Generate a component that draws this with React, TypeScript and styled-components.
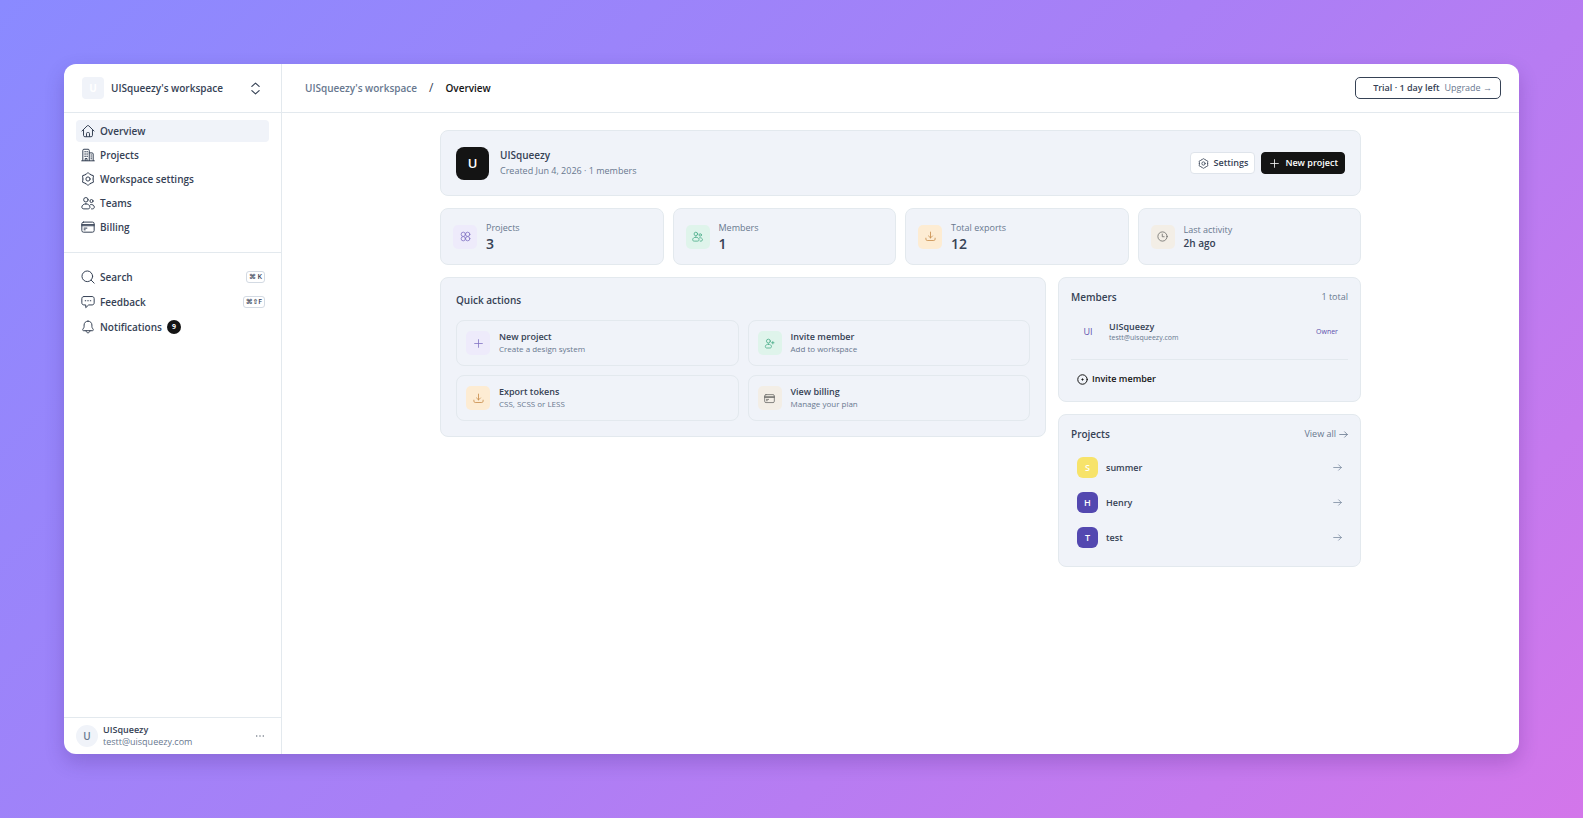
import React from "react";
import styled, { createGlobalStyle } from "styled-components";

const ink = "#364255";
const muted = "#68788f";
const line = "#e3e9ee";
const panel = "#f0f3f9";
const black = "#141414";

const GlobalStyle = createGlobalStyle`
  *, *::before, *::after { box-sizing: border-box; }
  body { margin: 0; }
  body, button {
    font-family: "Open Sans", "Noto Sans", sans-serif;
    font-size: 10px;
    line-height: 14px;
    color: ${ink};
  }
  button { margin: 0; padding: 0; border: 0; background: none; text-align: left; cursor: pointer; }
  a { color: inherit; text-decoration: none; }
  ul { list-style: none; margin: 0; padding: 0; }
  h1, h2 { margin: 0; }
`;

/* ---------- icons ---------- */

type IconName =
  | "home" | "building" | "gear" | "users" | "card" | "search" | "chat" | "bell"
  | "updown" | "plus" | "grid" | "download" | "clock" | "userPlus" | "target" | "arrow" | "dots";

const drawings: Record<IconName, React.ReactNode> = {
  home: (
    <>
      <path d="M1.4 10 8.9 2.600a1.600 1.600 0 0 1 2.200 0L18.600 10" />
      <path d="M3.600 8v8.200c0 1.200.8 2 2 2h8.800c1.200 0 2-.8 2-2V8" />
      <path d="M7.900 18v-4.600c0-.7.5-1.200 1.200-1.200h1.800c.7 0 1.200.5 1.200 1.200V18" />
    </>
  ),
  building: (
    <>
      <path d="M1 18.300h18M2.600 18V3.400c0-1 .6-1.600 1.600-1.600h6c1 0 1.600.6 1.600 1.600V18M11.800 7h4c1 0 1.600.6 1.600 1.600V18" />
      <path d="M5.300 5.400h1.200M8.200 5.400h1.200M5.300 8.600h1.200M8.200 8.600h1.200M5.300 11.800h1.200M8.200 11.800h1.200M14.200 10h.9M14.200 12.800h.9M14.200 15.400h.9M6 18v-3h2.600v3" />
    </>
  ),
  gear: (
    <>
      <circle cx="10" cy="10" r="3" />
      {[0, 60, 120, 180, 240, 300].map((turn) => (
        <path key={turn} d="M6.300 3.600C8 3.600 8.500 1.200 10 1.200S12 3.600 13.700 3.600" transform={`rotate(${turn} 10 10)`} />
      ))}
    </>
  ),
  users: (
    <>
      <circle cx="7" cy="5.400" r="3.200" />
      <circle cx="15" cy="7.200" r="2.200" />
      <path d="M7 11.200c-3 0-5.800 2-5.800 4.700 0 1.700 1.200 2.500 3 2.500h5.600c1.800 0 3-.8 3-2.500 0-2.700-2.800-4.700-5.800-4.700z" />
      <path d="M13.600 12.300c2.800-.6 5.400 1 5.400 3.400 0 1.700-1 2.700-2.400 2.700H15" />
    </>
  ),
  card: (
    <>
      <rect x="1.200" y="3" width="17.600" height="14.400" rx="2.400" />
      <path d="M1.200 6.600h17.600M1.200 8.200h17.600M4.400 11.600h4M4.400 14h1.600" />
    </>
  ),
  search: (
    <>
      <circle cx="9" cy="9" r="7.600" />
      <path d="m14.600 14.600 4.200 4.200" />
    </>
  ),
  chat: (
    <>
      <path d="M4.200 2.200h11.600c1.800 0 3 1.200 3 3v6c0 1.800-1.200 3-3 3H11l-4.200 3.900v-3.900H4.200c-1.800 0-3-1.200-3-3v-6c0-1.800 1.200-3 3-3z" />
      <path d="M6 8.200h.8M9.600 8.200h.8M13.200 8.200h.8" />
    </>
  ),
  bell: (
    <>
      <path d="M10 1.600c-3.400 0-5.600 2.600-5.600 5.600v2.400c0 .8-.3 1.400-.8 2.100l-1 1.600c-.6 1 0 2 1 2h12.800c1 0 1.600-1 1-2l-1-1.600c-.5-.7-.8-1.300-.8-2.100V7.200c0-3-2.200-5.600-5.600-5.600z" />
      <path d="M7.200 15.400c.2 1.800 1.300 2.900 2.800 2.900s2.600-1.100 2.800-2.900" />
    </>
  ),
  updown: <path d="m4.400 6.800 5.600-5 5.600 5M4.400 13.200l5.600 5 5.600-5" />,
  plus: <path d="M10 3v14M3 10h14" />,
  grid: (
    <>
      <circle cx="6" cy="6" r="3.900" />
      <circle cx="14" cy="6" r="3.900" />
      <circle cx="6" cy="14" r="3.900" />
      <circle cx="14" cy="14" r="3.900" />
    </>
  ),
  download: <path d="M10 2v10.500M6.400 9l3.600 3.600L13.600 9M1.600 13v1.800c0 1.500 1 2.500 2.500 2.500h11.800c1.500 0 2.500-1 2.500-2.500V13" />,
  clock: (
    <>
      <circle cx="10" cy="10" r="8.400" />
      <path d="M9.600 5.600v4.800H13" />
    </>
  ),
  userPlus: (
    <>
      <circle cx="8" cy="5.600" r="3.500" />
      <path d="M8 11.200c-3 0-5.600 1.900-5.600 4.500 0 1.600 1.100 2.500 2.800 2.500h5.600c1.700 0 2.800-.9 2.800-2.500 0-2.600-2.600-4.500-5.600-4.500z" />
      <path d="M16 6.400v4.400M13.800 8.600h4.400" />
    </>
  ),
  target: (
    <>
      <circle cx="10" cy="10" r="8.600" />
      <path d="M10 8.800v2.400M8.800 10h2.400" />
    </>
  ),
  arrow: <path d="M1.500 10h17M12.500 4l6 6-6 6" />,
  dots: <path d="M3 10h.8M9.600 10h.8M16.200 10h.8" />,
};

const Svg = styled.svg`
  display: block;
  flex: none;
  fill: none;
  stroke: currentColor;
  stroke-linecap: round;
  stroke-linejoin: round;
`;

const Icon = ({ name, size = 14, weight = 1 }: { name: IconName; size?: number; weight?: number }) => (
  <Svg width={size} height={size} viewBox="0 0 20 20" strokeWidth={(20 / size) * weight} aria-hidden="true">
    {drawings[name]}
  </Svg>
);

/* ---------- frame ---------- */

const Backdrop = styled.div`
  display: flex;
  min-height: 100vh;
  padding: 64px;
  background: linear-gradient(135deg, #8a8aff 0%, #a97ff6 50%, #d376ea 100%);
`;

const Window = styled.div`
  flex: 1;
  display: flex;
  min-width: 0;
  overflow: hidden;
  background: #fff;
  border-radius: 12px;
  box-shadow: 0 8px 20px rgba(40, 10, 90, 0.2);
`;

const Sidebar = styled.aside`
  flex: none;
  display: flex;
  flex-direction: column;
  width: 218px;
  border-right: 1px solid ${line};
`;

const Switcher = styled.button`
  display: flex;
  align-items: center;
  gap: 7px;
  height: 49px;
  padding: 0 19px 0 18px;
  border-bottom: 1px solid ${line};
  font-weight: 600;
  span:nth-child(2) { flex: 1; }
`;

const WorkspaceLogo = styled.span`
  display: grid;
  place-items: center;
  width: 22px;
  height: 22px;
  border-radius: 4px;
  background: ${panel};
  color: #fff;
  font-weight: 700;
`;

const NavGroup = styled.ul<{ $gap: number }>`
  display: flex;
  flex-direction: column;
  gap: ${(p) => p.$gap}px;
  padding: 7px 12px 14px;
  & + & { padding-top: 13px; border-top: 1px solid ${line}; }
`;

const NavLink = styled.a<{ $active?: boolean }>`
  display: flex;
  align-items: center;
  gap: 5px;
  height: 22px;
  padding: 0 4px 0 5px;
  border-radius: 4px;
  background: ${(p) => (p.$active ? panel : "transparent")};
  font-weight: 600;
`;

const Keys = styled.kbd`
  margin-left: auto;
  padding: 0 2px;
  border: 1px solid #d3dae3;
  border-radius: 3px;
  font: 600 7px/10px "Open Sans", "DejaVu Sans", sans-serif;
`;

const Badge = styled.span`
  display: grid;
  place-items: center;
  width: 14px;
  height: 14px;
  border-radius: 50%;
  background: ${black};
  color: #fff;
  font-size: 7px;
  line-height: 10px;
  font-weight: 700;
`;

const Account = styled.button`
  display: flex;
  align-items: center;
  gap: 5px;
  height: 37px;
  margin-top: auto;
  padding: 0 16px 0 12px;
  border-top: 1px solid ${line};
`;

const AccountAvatar = styled.span`
  display: grid;
  place-items: center;
  width: 22px;
  height: 22px;
  border-radius: 50%;
  background: ${panel};
  color: ${muted};
  font-weight: 600;
`;

const Lines = styled.span`
  flex: 1;
  display: flex;
  flex-direction: column;
  min-width: 0;
`;

const Text = styled.span<{ $size: number; $lh?: number; $weight?: number; $color?: string }>`
  font-size: ${(p) => p.$size}px;
  line-height: ${(p) => p.$lh ?? 12}px;
  font-weight: ${(p) => p.$weight ?? 400};
  color: ${(p) => p.$color ?? ink};
`;

/* ---------- main ---------- */

const Main = styled.main`
  flex: 1;
  min-width: 0;
`;

const TopBar = styled.header`
  display: flex;
  align-items: center;
  justify-content: space-between;
  height: 49px;
  padding: 0 18px 0 23px;
  border-bottom: 1px solid ${line};
`;

const Crumbs = styled.nav`
  display: flex;
  gap: 12px;
  font-weight: 600;
  a { color: ${muted}; }
  span { font-size: 12px; font-weight: 400; }
  strong { font-weight: 600; color: ${black}; }
`;

const Trial = styled.button`
  display: flex;
  align-items: center;
  gap: 5px;
  height: 22px;
  padding: 0 8px 0 17px;
  border: 1px solid ${ink};
  border-radius: 5px;
`;

const Content = styled.div`
  display: flex;
  flex-direction: column;
  gap: 12px;
  max-width: 921px;
  margin: 17px auto;
`;

const Card = styled.section`
  background: ${panel};
  border: 1px solid ${line};
  border-radius: 8px;
`;

const Hero = styled(Card)`
  display: flex;
  align-items: center;
  gap: 11px;
  height: 66px;
  padding: 0 15px;
`;

const HeroLogo = styled.span`
  display: grid;
  place-items: center;
  width: 33px;
  height: 33px;
  border-radius: 8px;
  background: ${black};
  color: #fff;
  font-size: 13px;
  font-weight: 600;
`;

const HeroButtons = styled.div`
  display: flex;
  gap: 6px;
`;

const Button = styled.button<{ $primary?: boolean }>`
  display: flex;
  align-items: center;
  gap: 5px;
  height: 22px;
  padding: 0 6px 0 7px;
  border: 1px solid ${(p) => (p.$primary ? black : "#dfe4eb")};
  border-radius: 4px;
  background: ${(p) => (p.$primary ? black : "#fff")};
  color: ${(p) => (p.$primary ? "#fff" : ink)};
  font-size: 9px;
  font-weight: 600;
`;

const Stats = styled.div`
  display: grid;
  grid-template-columns: repeat(4, 1fr);
  gap: 9px;
`;

const Stat = styled(Card)`
  display: flex;
  align-items: center;
  gap: 9px;
  height: 57px;
  padding: 0 12px;
`;

const tones = {
  violet: ["#eeebfb", "#8273c4"],
  green: ["#dff4eb", "#46ab87"],
  orange: ["#fdecd3", "#c78a48"],
  sand: ["#f3eee6", "#6b6b68"],
};

const Tile = styled.span<{ $tone: keyof typeof tones }>`
  display: grid;
  place-items: center;
  flex: none;
  width: 24px;
  height: 24px;
  border-radius: 5px;
  background: ${(p) => tones[p.$tone][0]};
  color: ${(p) => tones[p.$tone][1]};
`;

const Columns = styled.div`
  display: grid;
  grid-template-columns: 2fr 1fr;
  align-items: start;
  gap: 12px;
`;

const Side = styled.div`
  display: flex;
  flex-direction: column;
  gap: 12px;
`;

const Quick = styled(Card)`
  padding: 15px;
`;

const Title = styled.h2`
  font-size: 10px;
  line-height: 14px;
  font-weight: 600;
`;

const Actions = styled.div`
  display: grid;
  grid-template-columns: 1fr 1fr;
  gap: 9px;
  margin-top: 13px;
`;

const Action = styled.button`
  display: flex;
  align-items: center;
  gap: 9px;
  height: 46px;
  padding: 0 9px;
  border: 1px solid ${line};
  border-radius: 8px;
`;

const ListCard = styled(Card)`
  padding: 11px 12px;
`;

const CardHead = styled.div`
  display: flex;
  align-items: center;
  justify-content: space-between;
  height: 16px;
`;

const MoreLink = styled.a`
  display: flex;
  align-items: center;
  gap: 3px;
  color: ${muted};
  font-size: 9px;
`;

const MemberRow = styled.div`
  display: flex;
  align-items: center;
  gap: 10px;
  height: 55px;
  padding: 0 10px 0 6px;
  border-bottom: 1px solid ${line};
`;

const Initials = styled.span`
  display: grid;
  place-items: center;
  width: 22px;
  height: 22px;
  color: #5b50ad;
  font-size: 9px;
`;

const InviteButton = styled.button`
  display: flex;
  align-items: center;
  gap: 4px;
  height: 22px;
  margin-top: 8px;
  padding: 0 6px;
  color: ${black};
  font-size: 9px;
  font-weight: 600;
`;

const ProjectList = styled.ul`
  margin-top: 8px;
`;

const ProjectLink = styled.a`
  display: flex;
  align-items: center;
  gap: 8px;
  height: 35px;
  padding: 0 6px;
  font-size: 9px;
  font-weight: 600;
  svg { margin-left: auto; color: #7c8ba1; }
`;

const ProjectLogo = styled.span<{ $color: string }>`
  display: grid;
  place-items: center;
  width: 21px;
  height: 21px;
  border-radius: 6px;
  background: ${(p) => p.$color};
  color: #fff;
  font-weight: 600;
`;

const nav: [IconName, string][] = [
  ["home", "Overview"],
  ["building", "Projects"],
  ["gear", "Workspace settings"],
  ["users", "Teams"],
  ["card", "Billing"],
];

const stats: { icon: IconName; tone: keyof typeof tones; label: string; value: string; small?: boolean }[] = [
  { icon: "grid", tone: "violet", label: "Projects", value: "3" },
  { icon: "users", tone: "green", label: "Members", value: "1" },
  { icon: "download", tone: "orange", label: "Total exports", value: "12" },
  { icon: "clock", tone: "sand", label: "Last activity", value: "2h ago", small: true },
];

const actions: { icon: IconName; tone: keyof typeof tones; label: string; hint: string }[] = [
  { icon: "plus", tone: "violet", label: "New project", hint: "Create a design system" },
  { icon: "userPlus", tone: "green", label: "Invite member", hint: "Add to workspace" },
  { icon: "download", tone: "orange", label: "Export tokens", hint: "CSS, SCSS or LESS" },
  { icon: "card", tone: "sand", label: "View billing", hint: "Manage your plan" },
];

const projects = [
  { name: "summer", color: "#f7e36a" },
  { name: "Henry", color: "#5348b0" },
  { name: "test", color: "#5348b0" },
];

export default function App() {
  return (
    <>
      <GlobalStyle />
      <Backdrop>
        <Window>
          <Sidebar>
            <Switcher type="button">
              <WorkspaceLogo>U</WorkspaceLogo>
              <span>UISqueezy's workspace</span>
              <Icon name="updown" size={13} weight={1.2} />
            </Switcher>
            <NavGroup $gap={2}>
              {nav.map(([icon, label], i) => (
                <li key={label}>
                  <NavLink href="#" $active={i === 0}>
                    <Icon name={icon} />
                    {label}
                  </NavLink>
                </li>
              ))}
            </NavGroup>
            <NavGroup $gap={3}>
              <li>
                <NavLink href="#"><Icon name="search" />Search<Keys>⌘ K</Keys></NavLink>
              </li>
              <li>
                <NavLink href="#"><Icon name="chat" />Feedback<Keys>⌘⇧F</Keys></NavLink>
              </li>
              <li>
                <NavLink href="#"><Icon name="bell" />Notifications<Badge>9</Badge></NavLink>
              </li>
            </NavGroup>
            <Account type="button">
              <AccountAvatar>U</AccountAvatar>
              <Lines>
                <Text $size={9} $weight={600}>UISqueezy</Text>
                <Text $size={9} $color={muted}>testt@uisqueezy.com</Text>
              </Lines>
              <Icon name="dots" size={10} />
            </Account>
          </Sidebar>

          <Main>
            <TopBar>
              <Crumbs aria-label="Breadcrumb">
                <a href="#">UISqueezy's workspace</a>
                <span>/</span>
                <strong>Overview</strong>
              </Crumbs>
              <Trial type="button">
                <Text $size={9} $weight={600}>Trial · 1 day left</Text>
                <Text $size={9} $color={muted}>Upgrade →</Text>
              </Trial>
            </TopBar>

            <Content>
              <Hero>
                <HeroLogo>U</HeroLogo>
                <Lines>
                  <Text as="h1" $size={10} $lh={16} $weight={600}>UISqueezy</Text>
                  <Text $size={9} $lh={16} $color={muted}>Created Jun 4, 2026 · 1 members</Text>
                </Lines>
                <HeroButtons>
                  <Button type="button"><Icon name="gear" size={11} weight={0.8} />Settings</Button>
                  <Button type="button" $primary><Icon name="plus" size={11} weight={0.8} />New project</Button>
                </HeroButtons>
              </Hero>

              <Stats>
                {stats.map((s) => (
                  <Stat key={s.label}>
                    <Tile $tone={s.tone}><Icon name={s.icon} size={11} weight={0.8} /></Tile>
                    <Lines>
                      <Text $size={9} $lh={s.small ? 12 : 14} $color={muted}>{s.label}</Text>
                      <Text $size={s.small ? 10 : 14} $lh={s.small ? 14 : 18} $weight={600}>{s.value}</Text>
                    </Lines>
                  </Stat>
                ))}
              </Stats>

              <Columns>
                <Quick>
                  <Title>Quick actions</Title>
                  <Actions>
                    {actions.map((a) => (
                      <Action type="button" key={a.label}>
                        <Tile $tone={a.tone}><Icon name={a.icon} size={11} weight={0.8} /></Tile>
                        <Lines>
                          <Text $size={9} $weight={600}>{a.label}</Text>
                          <Text $size={8} $color={muted}>{a.hint}</Text>
                        </Lines>
                      </Action>
                    ))}
                  </Actions>
                </Quick>

                <Side>
                  <ListCard>
                    <CardHead>
                      <Title>Members</Title>
                      <Text $size={9} $color={muted}>1 total</Text>
                    </CardHead>
                    <MemberRow>
                      <Initials>UI</Initials>
                      <Lines>
                        <Text $size={9} $weight={600}>UISqueezy</Text>
                        <Text $size={7} $lh={10} $color={muted}>testt@uisqueezy.com</Text>
                      </Lines>
                      <Text $size={7} $color="#5b50ad">Owner</Text>
                    </MemberRow>
                    <InviteButton type="button"><Icon name="target" size={11} />Invite member</InviteButton>
                  </ListCard>

                  <ListCard>
                    <CardHead>
                      <Title>Projects</Title>
                      <MoreLink href="#">View all<Icon name="arrow" size={9} weight={0.8} /></MoreLink>
                    </CardHead>
                    <ProjectList>
                      {projects.map((p) => (
                        <li key={p.name}>
                          <ProjectLink href="#">
                            <ProjectLogo $color={p.color}>{p.name[0].toUpperCase()}</ProjectLogo>
                            {p.name}
                            <Icon name="arrow" size={9} weight={0.8} />
                          </ProjectLink>
                        </li>
                      ))}
                    </ProjectList>
                  </ListCard>
                </Side>
              </Columns>
            </Content>
          </Main>
        </Window>
      </Backdrop>
    </>
  );
}
